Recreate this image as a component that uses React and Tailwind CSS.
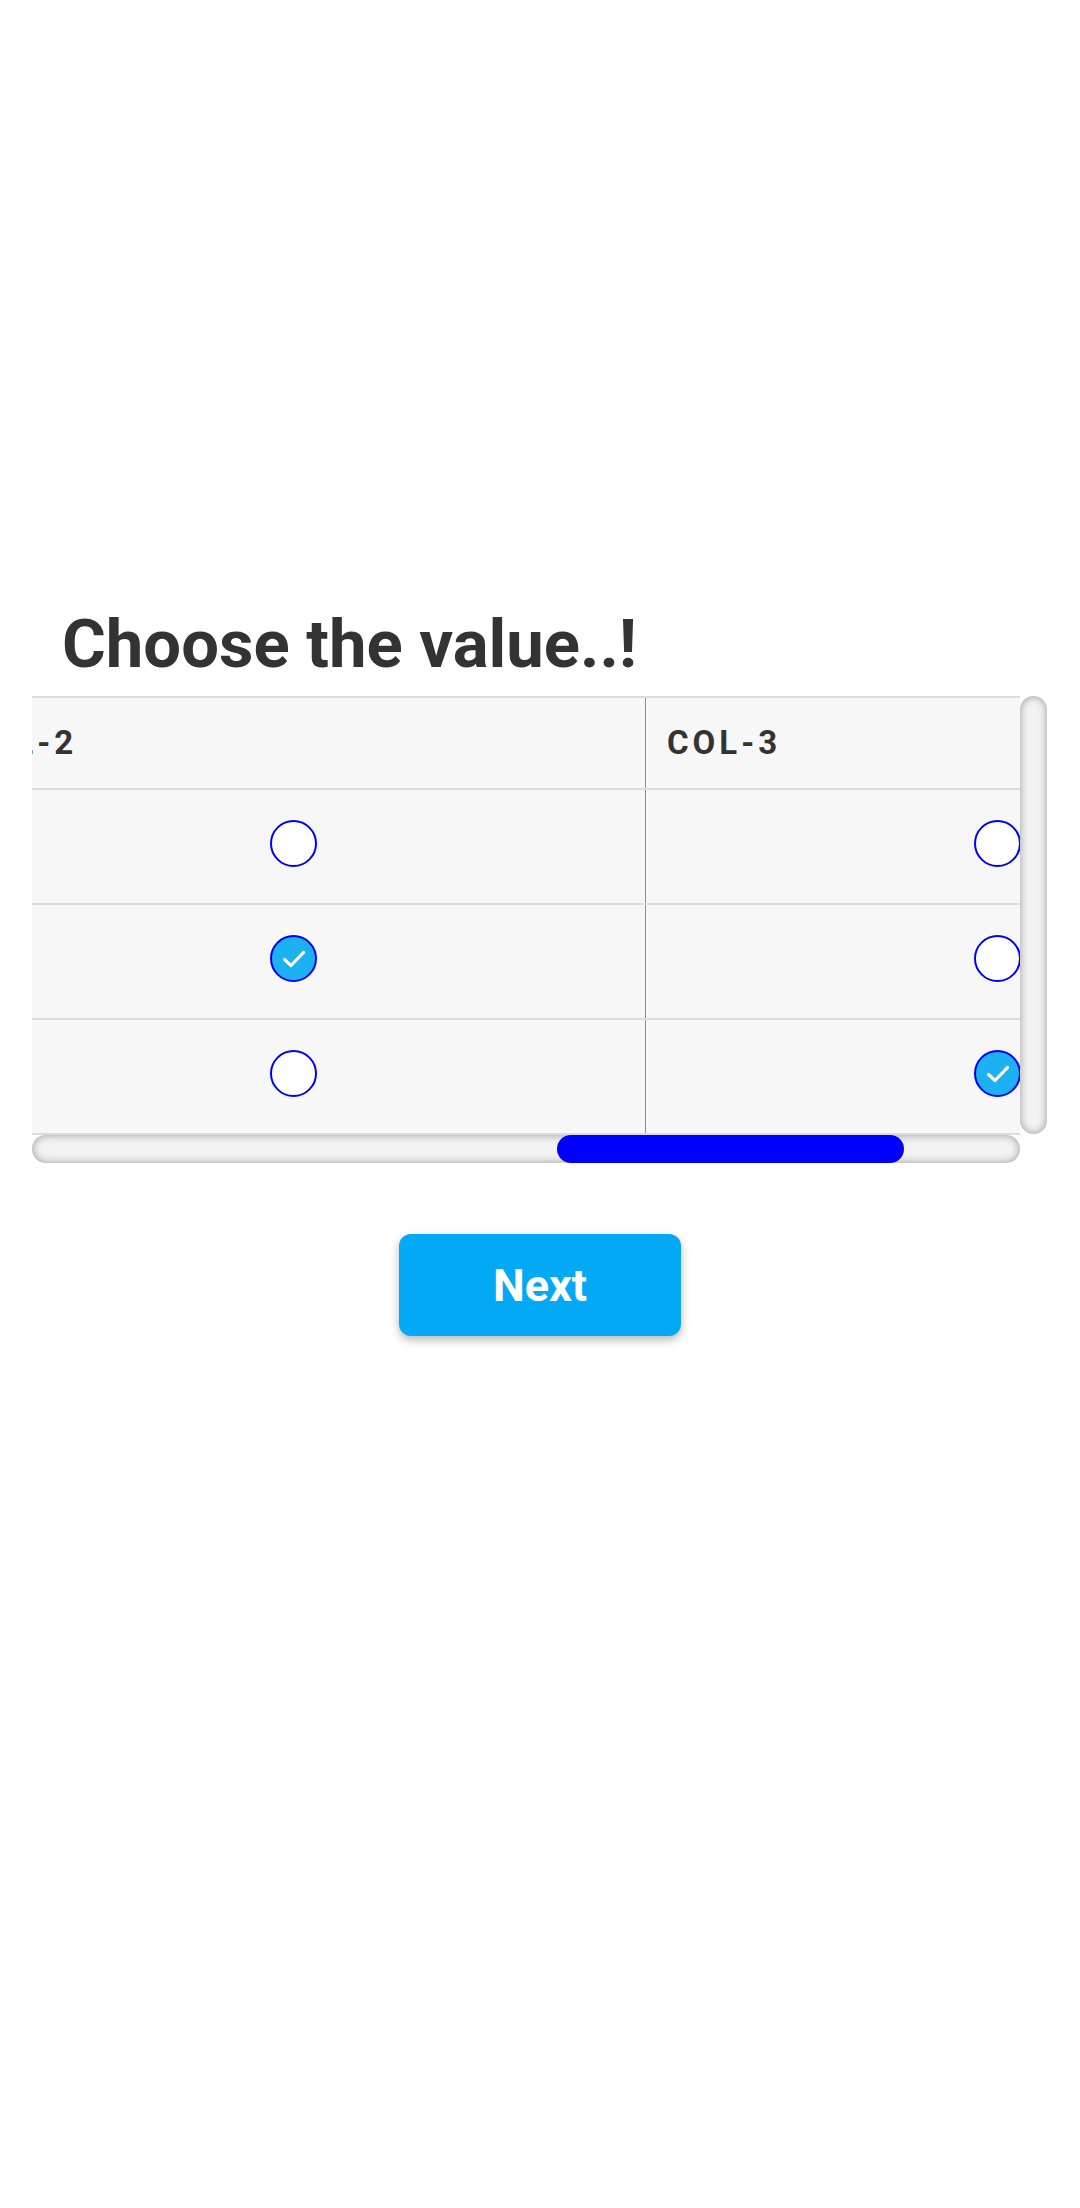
import React from "react";

const cols = ["", "", "COL-2", "COL-3"];
const rows = [
  [false, false, false],
  [false, true, false],
  [true, false, true],
];

function Radio({ checked }) {
  if (checked) {
    return (
      <div className="w-[47px] h-[47px] rounded-full border-2 border-[#0000ff] bg-[#1eb1f1] flex items-center justify-center">
        <svg width="47" height="47" viewBox="0 0 47 47" className="shrink-0">
          <polyline
            points="14.5,24.5 21,30.5 33.5,17.5"
            fill="none"
            stroke="#ffffff"
            strokeWidth="3.2"
            strokeLinecap="round"
            strokeLinejoin="round"
          />
        </svg>
      </div>
    );
  }
  return <div className="w-[47px] h-[47px] rounded-full border-2 border-[#0000ff] bg-white" />;
}

export default function App() {
  return (
    <div className="min-h-[2208px] w-full bg-white font-['Roboto',_'Noto_Sans',_sans-serif] text-[#333333]">
      <div className="px-[32px] pt-[610px]">
        <h1 className="pl-[30px] text-[67px] leading-[68px] font-bold text-[#333333]">
          Choose the value..!
        </h1>

        <div className="mt-[18px] grid grid-cols-[988px_27px] grid-rows-[439px_28px]">
          <div className="overflow-hidden">
            <div className="ml-[-1498px] w-[2816px] border-t-2 border-[#dcdcdc] bg-[#f7f7f7]">
              <div className="flex h-[92px] border-b-2 border-[#dcdcdc]">
                {cols.map((c, i) => (
                  <div
                    key={i}
                    className="w-[704px] shrink-0 border-r border-[#8c8c8c] flex items-center pl-[21px] text-[33px] font-bold tracking-[4px] text-[#333333]"
                  >
                    {c}
                  </div>
                ))}
              </div>
              {rows.map((r, ri) => (
                <div key={ri} className="flex h-[115px] border-b-2 border-[#dcdcdc]">
                  <div className="w-[704px] shrink-0 border-r border-[#8c8c8c]" />
                  {r.map((v, ci) => (
                    <div
                      key={ci}
                      className="w-[704px] shrink-0 border-r border-[#8c8c8c] flex items-center justify-center pb-[6px]"
                    >
                      <Radio checked={v} />
                    </div>
                  ))}
                </div>
              ))}
            </div>
          </div>

          <div className="h-[438px] rounded-full bg-[#f3f3f3] shadow-[inset_0_0_8px_rgba(0,0,0,0.38)]" />

          <div className="h-[28px] rounded-full bg-[#f3f3f3] shadow-[inset_0_0_8px_rgba(0,0,0,0.38)] flex">
            <div className="ml-[525px] w-[347px] h-[28px] rounded-full bg-[#0000ff]" />
          </div>
          <div />
        </div>

        <div className="mt-[71px] flex justify-center">
          <button className="w-[282px] h-[102px] rounded-[12px] bg-[#03a9f4] text-white text-[45px] font-bold leading-none shadow-[0_4px_10px_rgba(0,0,0,0.28)] flex items-center justify-center">
            Next
          </button>
        </div>
      </div>
    </div>
  );
}
